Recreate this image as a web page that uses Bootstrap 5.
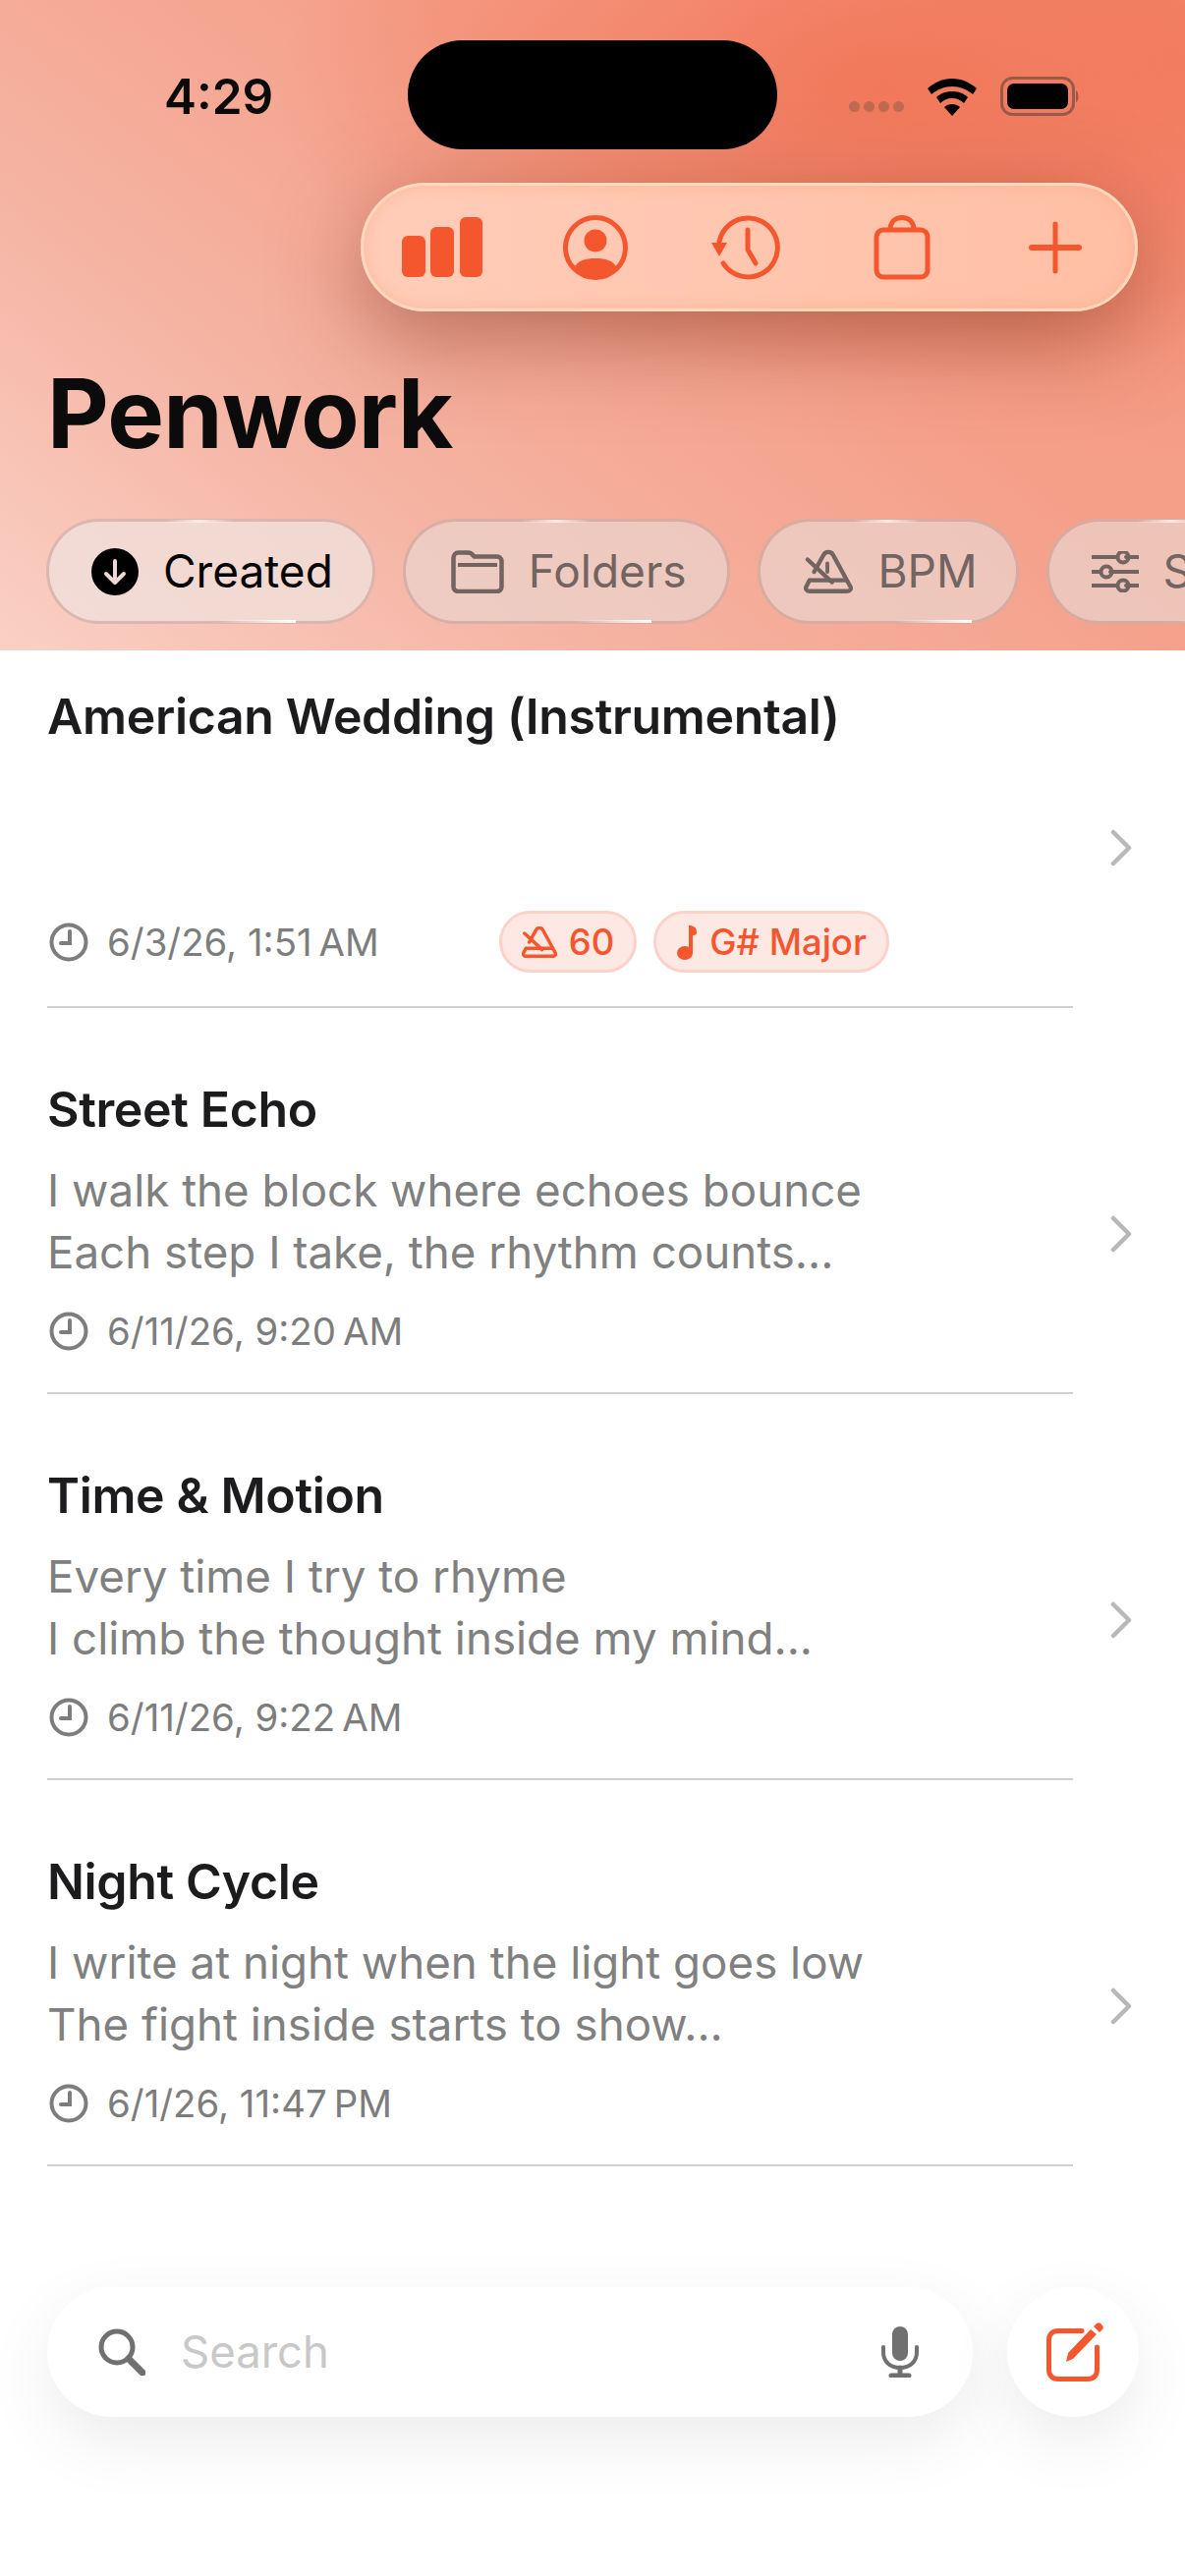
<!DOCTYPE html>
<html lang="en">
<head>
  <meta charset="UTF-8">
  <meta name="viewport" content="width=device-width, initial-scale=1.0">
  <title>Penwork</title>
  <link rel="stylesheet" href="https://cdn.jsdelivr.net/npm/bootstrap@5.3.1/dist/css/bootstrap.min.css">
  <style>
    body { background: #fff; font-family: Inter, "Liberation Sans", sans-serif; }
    .phone { width: 1206px; height: 2622px; overflow: hidden; position: relative; background: #fff; }
    .hero {
      height: 662px; overflow: hidden; position: relative;
      background:
        radial-gradient(ellipse 620px 300px at 900px 90px, rgba(241,118,88,.95), rgba(241,118,88,0) 100%),
        radial-gradient(ellipse 500px 400px at 1206px 60px, rgba(242,122,94,.8), rgba(242,122,94,0) 100%),
        linear-gradient(38deg, #fad0c5 0%, #f5b3a2 30%, #f59f89 62%, #f69c85 100%);
    }
    .island { position: absolute; left: 415px; top: 41px; width: 376px; height: 111px; background: #000; border-radius: 56px; }
    .status { height: 186px; padding: 78px 108px 0 167px; }
    .clock-text { font-size: 49.500px; font-weight: 600; line-height: 40px; color: #0a0a0a; }
    .cell-dot { width: 11px; height: 11px; border-radius: 50%; background: #c06a52; }
    .tool-wrap { padding-right: 48px; }
    .toolbar {
      width: 791px; height: 131px; border-radius: 66px; padding: 0 0 0 2px;
      grid-template-columns: repeat(5, 156px); justify-items: center; align-items: center;
      background: linear-gradient(90deg, #ffcdb9, #ffbfa5);
      border: 3px solid #ffd8bd;
      box-shadow: 0 26px 90px rgba(120,50,30,.5), inset 0 0 16px rgba(255,170,130,.55);
    }
    .hist-ico { margin-right: 7px; }
    .penwork { font-size: 97px; font-weight: 700; line-height: 100px; margin: 54px 0 0 48px; color: #0b0b0b; letter-spacing: -.8px; }
    .chips { margin: 57px 0 0 47px; gap: 28px; }
    .chip {
      height: 107px; border-radius: 54px; padding: 0 42px 0 43px; gap: 25px; flex-shrink: 0;
      font-size: 46px; position: relative;
      background: rgba(234,214,208,.68);
      border: 3px solid rgba(190,140,128,.45);
      color: #726461;
    }
    .chip::before {
      content: ""; position: absolute; left: 36%; top: -2px; width: 70px; height: 3px;
      background: linear-gradient(90deg, rgba(255,255,255,0), rgba(255,255,255,.75), rgba(255,255,255,0));
    }
    .chip::after {
      content: ""; position: absolute; left: 52%; bottom: -2px; width: 80px; height: 3px;
      background: linear-gradient(90deg, rgba(255,255,255,0), #fff);
    }
    .chip-on { color: #050505; background: rgba(240,224,219,.8); padding-right: 40px; }
    .chip-folder { padding-left: 46px; }
    .chip-bpm { padding-left: 44px; padding-right: 39px; }
    .song { margin: 0 0 0 48px; width: 1044px; padding: 79px 0 40px; border-bottom: 2px solid #d0d0d0; }
    .song-first { padding: 43px 0 34px; }
    .song-name { font-size: 50px; font-weight: 600; line-height: 48px; color: #1c1c1e; letter-spacing: -.35px; }
    .song-text { font-size: 45.700px; line-height: 63px; color: #808080; margin: 27px 0 27px; height: 126px; white-space: pre-line; }
    .song-first .song-text { margin-bottom: 21px; }
    .song-date { font-size: 38.400px; color: #7d7d7d; gap: 19px; line-height: 44px; }
    .song-date > svg { margin-left: 2px; }
    .song-first .song-date { height: 63px; }
    .tag-row { gap: 17px; margin-left: 103px; }
    .tag {
      height: 63px; border-radius: 32px; padding: 0 20px; gap: 12px; font-size: 36.500px; font-weight: 450;
      color: #f4572d; background: #fde8e4; border: 3px solid #fcd2c8;
    }
    .arrow-r { margin-top: 30px; margin-right: -61px; }
    .foot { margin: 123px 47px 0 48px; gap: 35px; }
    .searchbox {
      height: 132px; width: 942px; border-radius: 66px; background: #fff; padding: 0 55px 0 52px;
      box-shadow: 0 24px 70px rgba(0,0,0,.08);
      font-size: 45.500px; color: #c8c8c8; gap: 36px;
    }
    .compose { width: 134px; height: 132px; border-radius: 50%; background: #fff; box-shadow: 0 24px 70px rgba(0,0,0,.08); padding-left: 6px; }
  </style>
</head>
<body>
  <div class="phone">
    <div class="hero">
      <div class="island"></div>

      <!-- status bar -->
      <div class="status d-flex justify-content-between align-items-start">
        <div class="clock-text">4:29</div>
        <div class="d-flex align-items-end">
          <div class="d-flex gap-1 me-4 mb-1">
            <span class="cell-dot"></span><span class="cell-dot"></span><span class="cell-dot"></span><span class="cell-dot"></span>
          </div>
          <svg width="50" height="38" viewBox="0 0 50 38" class="me-4"><path d="M25 0C15 0 7 4 0 10l4 6c6-5 13-8 21-8s15 3 21 8l4-6C43 4 35 0 25 0z" fill="#000"/><path d="M25 13c-6 0-12 2-16 6l4 6c3-3 7-5 12-5s9 2 12 5l4-6c-4-4-10-6-16-6z" fill="#000"/><path d="M25 26c-3 0-6 1-8 3l8 9 8-9c-2-2-5-3-8-3z" fill="#000"/></svg>
          <svg width="80" height="40" viewBox="0 0 80 40"><rect x="1.500" y="1.500" width="73" height="37" rx="11" fill="none" stroke="#9a5a4a" stroke-width="3"/><rect x="7" y="7" width="62" height="26" rx="7" fill="#000"/><path d="M77 14c3 1 3.500 11 0 12z" fill="#9a5a4a"/></svg>
        </div>
      </div>

      <!-- toolbar -->
      <div class="tool-wrap d-flex justify-content-end">
        <div class="toolbar d-grid">
          <svg width="82" height="62" viewBox="0 0 82 62" fill="#f4572d"><rect x="0" y="19" width="24" height="42" rx="6"/><rect x="29" y="10" width="24" height="51" rx="6"/><rect x="59" y="0" width="23" height="61" rx="6"/></svg>
          <svg width="66" height="66" viewBox="0 0 66 66"><circle cx="33" cy="33" r="30.500" fill="none" stroke="#f4572d" stroke-width="5"/><circle cx="33" cy="26" r="11.500" fill="#f4572d"/><path d="M11 54c4-8 12-10 22-10s18 2 22 10c-6 7-14 11-22 11s-16-4-22-11z" fill="#f4572d"/></svg>
          <svg class="hist-ico" width="72" height="66" viewBox="0 0 72 66" fill="none" stroke="#f4572d" stroke-width="5" stroke-linecap="round"><path d="M9 27C12 13 24 3 38 3a30 30 0 1 1-25 46"/><path d="M38 15v20l8 14"/><path d="M1 28h16l-8 14z" fill="#f4572d" stroke="none"/></svg>
          <svg width="58" height="66" viewBox="0 0 58 66" fill="none" stroke="#f4572d" stroke-width="5"><rect x="3" y="15" width="52" height="48" rx="7"/><path d="M17 15c0-8 5-12.500 12-12.500S41 7 41 15"/></svg>
          <svg width="54" height="54" viewBox="0 0 54 54" stroke="#f4572d" stroke-linecap="round"><path d="M27 3v48" stroke-width="5"/><path d="M3 27h48" stroke-width="6"/></svg>
        </div>
      </div>

      <div class="penwork">Penwork</div>

      <!-- filter chips -->
      <div class="chips d-flex">
        <div class="chip chip-on d-flex align-items-center">
          <svg width="48" height="48" viewBox="0 0 48 48"><circle cx="24" cy="24" r="24" fill="#000"/><path d="M24 13v21M15 26l9 9 9-9" fill="none" stroke="#f0d8d2" stroke-width="4" stroke-linecap="round" stroke-linejoin="round"/></svg>
          <span>Created</span>
        </div>
        <div class="chip chip-folder d-flex align-items-center">
          <svg width="54" height="44" viewBox="0 0 54 44" fill="none" stroke="#726461" stroke-width="4.500" stroke-linejoin="round"><path d="M2.500 8c0-3 2-5.500 5-5.500h10c3 0 4 1 6 4h23c3 0 5 2 5 5V37c0 3-2 5-5 5h-39c-3 0-5-2-5-5z"/><path d="M7 15h40" stroke-width="4"/></svg>
          <span>Folders</span>
        </div>
        <div class="chip chip-bpm d-flex align-items-center">
          <svg width="50" height="46" viewBox="0 0 52 46" fill="none" stroke="#726461" stroke-width="4.500" stroke-linecap="round" stroke-linejoin="round"><path d="M11 23l10-18c2-4 8-4 10 0l18 33c2 3 0 5.500-3 5.500H6c-3 0-5-2.500-3-5.500l3-6"/><path d="M7 32h38"/><path d="M4 10l26 24"/><path d="M25 14v9" stroke-width="4"/></svg>
          <span>BPM</span>
        </div>
        <div class="chip d-flex align-items-center">
          <svg width="48" height="42" viewBox="0 0 48 42" fill="none" stroke="#726461" stroke-width="4" stroke-linecap="round"><path d="M1 6h24m10 0h12M1 21h8m10 0h28M1 35h24m10 0h12"/><circle cx="32" cy="6" r="5.500"/><circle cx="15" cy="21" r="5.500"/><circle cx="32" cy="35" r="5.500"/></svg>
          <span>Sort</span>
        </div>
      </div>
    </div>

    <!-- song list -->
    <div class="song song-first d-flex justify-content-between">
      <div>
        <div class="song-name">American Wedding (Instrumental)</div>
        <div class="song-text"></div>
        <div class="song-date d-flex align-items-center">
          <svg width="40" height="40" viewBox="0 0 40 40" fill="none" stroke="#7d7d7d" stroke-width="4" stroke-linecap="round"><circle cx="20" cy="20" r="17.500"/><path d="M21 9v12H12"/></svg>
          <span>6/3/26, 1:51&#8239;AM</span>
          <div class="tag-row d-flex">
            <div class="tag d-flex align-items-center">
              <svg width="36" height="32" viewBox="0 0 52 46" fill="none" stroke="#f4572d" stroke-width="5" stroke-linecap="round" stroke-linejoin="round"><path d="M11 23l10-18c2-4 8-4 10 0l18 33c2 3 0 5.500-3 5.500H6c-3 0-5-2.500-3-5.500l3-6"/><path d="M7 32h38"/><path d="M4 10l26 24"/></svg>
              <span>60</span>
            </div>
            <div class="tag d-flex align-items-center">
              <svg width="22" height="36" viewBox="0 0 22 36" fill="#f4572d"><ellipse cx="9" cy="29" rx="8" ry="7"/><path d="M13 29V1c5 0 8 2 8 7 0 2-1 3-3 3h-1v18z"/></svg>
              <span>G# Major</span>
            </div>
          </div>
        </div>
      </div>
      <svg class="arrow-r align-self-center" width="24" height="38" viewBox="0 0 24 38" fill="none" stroke="#b8b8b8" stroke-width="4.500" stroke-linecap="round" stroke-linejoin="round"><path d="M4 3l16 16L4 35"/></svg>
    </div>

    <div class="song d-flex justify-content-between">
      <div>
        <div class="song-name">Street Echo</div>
        <div class="song-text">I walk the block where echoes bounce
Each step I take, the rhythm counts...</div>
        <div class="song-date d-flex align-items-center">
          <svg width="40" height="40" viewBox="0 0 40 40" fill="none" stroke="#7d7d7d" stroke-width="4" stroke-linecap="round"><circle cx="20" cy="20" r="17.500"/><path d="M21 9v12H12"/></svg>
          <span>6/11/26, 9:20&#8239;AM</span>
        </div>
      </div>
      <svg class="arrow-r align-self-center" width="24" height="38" viewBox="0 0 24 38" fill="none" stroke="#b8b8b8" stroke-width="4.500" stroke-linecap="round" stroke-linejoin="round"><path d="M4 3l16 16L4 35"/></svg>
    </div>

    <div class="song d-flex justify-content-between">
      <div>
        <div class="song-name">Time &amp; Motion</div>
        <div class="song-text">Every time I try to rhyme
I climb the thought inside my mind...</div>
        <div class="song-date d-flex align-items-center">
          <svg width="40" height="40" viewBox="0 0 40 40" fill="none" stroke="#7d7d7d" stroke-width="4" stroke-linecap="round"><circle cx="20" cy="20" r="17.500"/><path d="M21 9v12H12"/></svg>
          <span>6/11/26, 9:22&#8239;AM</span>
        </div>
      </div>
      <svg class="arrow-r align-self-center" width="24" height="38" viewBox="0 0 24 38" fill="none" stroke="#b8b8b8" stroke-width="4.500" stroke-linecap="round" stroke-linejoin="round"><path d="M4 3l16 16L4 35"/></svg>
    </div>

    <div class="song d-flex justify-content-between">
      <div>
        <div class="song-name">Night Cycle</div>
        <div class="song-text">I write at night when the light goes low
The fight inside starts to show...</div>
        <div class="song-date d-flex align-items-center">
          <svg width="40" height="40" viewBox="0 0 40 40" fill="none" stroke="#7d7d7d" stroke-width="4" stroke-linecap="round"><circle cx="20" cy="20" r="17.500"/><path d="M21 9v12H12"/></svg>
          <span>6/1/26, 11:47&#8239;PM</span>
        </div>
      </div>
      <svg class="arrow-r align-self-center" width="24" height="38" viewBox="0 0 24 38" fill="none" stroke="#b8b8b8" stroke-width="4.500" stroke-linecap="round" stroke-linejoin="round"><path d="M4 3l16 16L4 35"/></svg>
    </div>

    <!-- search + compose -->
    <div class="foot d-flex align-items-center">
      <div class="searchbox d-flex align-items-center">
        <svg width="48" height="48" viewBox="0 0 48 48" fill="none" stroke="#707070" stroke-linecap="round"><circle cx="19" cy="19" r="16" stroke-width="5"/><path d="M31 31l14 14" stroke-width="7"/></svg>
        <span class="flex-grow-1">Search</span>
        <svg width="38" height="52" viewBox="0 0 38 52" fill="none" stroke="#707070" stroke-width="4" stroke-linecap="round"><rect x="11" y="0" width="16" height="35" rx="8" fill="#707070" stroke="none"/><path d="M2 21v5c0 10 7 16 17 16s17-6 17-16v-5"/><path d="M19 42v7M10 50h18" stroke-width="5"/></svg>
      </div>
      <div class="compose d-flex align-items-center justify-content-center">
        <svg width="60" height="60" viewBox="0 0 60 60" fill="none"><path d="M36 8.500H12C6 8.500 2.500 12 2.500 18v30c0 6 3.500 9.500 9.500 9.500h30c6 0 9.500-3.500 9.500-9.500V25" stroke="#f4572d" stroke-width="5" stroke-linecap="round"/><path d="M20 40l2-9L45 7l6 5-24 25z" fill="#f4572d"/><path d="M48 4l3-3c1-1 3-1 4 0l2 2c1 1 1 3 0 4l-3 3z" fill="#f4572d"/></svg>
      </div>
    </div>
  </div>

  <script src="https://cdn.jsdelivr.net/npm/bootstrap@5.3.1/dist/js/bootstrap.bundle.min.js"></script>
</body>
</html>
